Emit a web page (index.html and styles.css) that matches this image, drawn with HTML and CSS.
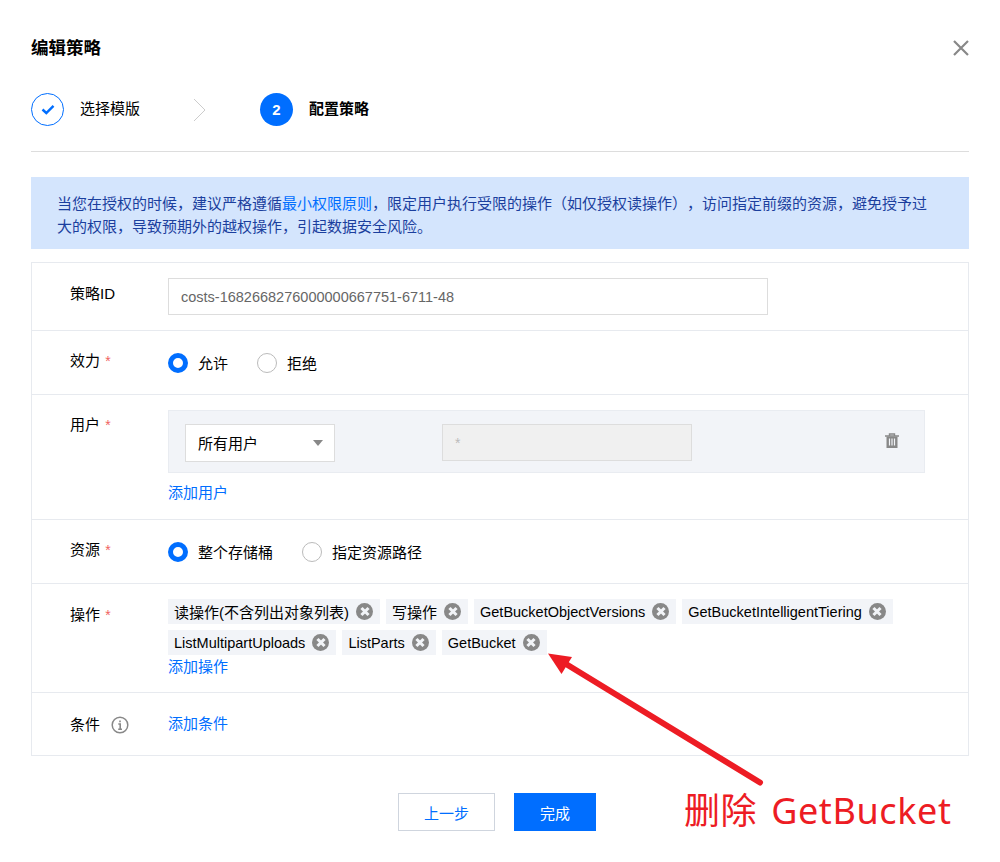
FILE: index.html
```html
<!DOCTYPE html>
<html lang="zh-CN">
  <head>
    <meta charset="UTF-8" />
    <meta name="viewport" content="width=device-width, initial-scale=1.0" />
    <title>编辑策略</title>
    <link rel="stylesheet" href="styles.css">
  </head>
  <body>
    <div class="dialog">
      <div class="dialog-head">
        <h1>编辑策略</h1>
        <svg class="close" width="16" height="16" viewBox="0 0 16 16">
          <path d="M1 1L15 15M15 1L1 15" stroke="#888" stroke-width="2.2" fill="none" />
        </svg>
      </div>

      <div class="steps">
        <div class="step-circle done">
          <svg width="14" height="11" viewBox="0 0 14 11">
            <path d="M1.5 5.5L5.3 9L12.5 1.8" stroke="#006eff" stroke-width="2.4" fill="none" />
          </svg>
        </div>
        <span class="step-label">选择模版</span>
        <svg class="step-arrow" width="13" height="24" viewBox="0 0 13 24">
          <path d="M1 1L12 12L1 23" stroke="#ccc" stroke-width="1" fill="none" />
        </svg>
        <div class="step-circle active">2</div>
        <span class="step-label current">配置策略</span>
      </div>

      <div class="alert">
        当您在授权的时候，建议严格遵循<a href="#">最小权限原则</a>，限定用户执行受限的操作（如仅授权读操作），访问指定前缀的资源，避免授予过大的权限，导致预期外的越权操作，引起数据安全风险。
      </div>

      <div class="form">
        <div class="row row-id">
          <div class="label">策略ID</div>
          <div class="field">
            <div class="text-input">costs-1682668276000000667751-6711-48</div>
          </div>
        </div>

        <div class="row row-radio">
          <div class="label">效力 <i>*</i></div>
          <div class="field radio-group">
            <span class="radio checked"></span><span class="radio-text">允许</span>
            <span class="radio"></span><span class="radio-text">拒绝</span>
          </div>
        </div>

        <div class="row row-user">
          <div class="label">用户 <i>*</i></div>
          <div class="field">
            <div class="user-box">
              <div class="select">所有用户<span class="caret"></span></div>
              <div class="disabled-input">*</div>
              <svg class="trash" width="16" height="16" viewBox="0 0 16 16">
                <path d="M5.5 2.5V1H10.5V2.5M1 3H15" stroke="#888" stroke-width="1.4" fill="none" />
                <path d="M2.5 3.5H13.5V15H2.5Z" fill="#888" />
                <path d="M5.5 5.5V12.5M8 5.5V12.5M10.5 5.5V12.5" stroke="#f2f4f8" stroke-width="1.2" fill="none" />
              </svg>
            </div>
            <a class="link add-user" href="#">添加用户</a>
          </div>
        </div>

        <div class="row row-radio">
          <div class="label">资源 <i>*</i></div>
          <div class="field radio-group">
            <span class="radio checked"></span><span class="radio-text">整个存储桶</span>
            <span class="radio"></span><span class="radio-text">指定资源路径</span>
          </div>
        </div>

        <div class="row row-action">
          <div class="label">操作 <i>*</i></div>
          <div class="field">
            <div class="tags">
              <span class="tag">读操作(不含列出对象列表)<b class="tag-x"></b></span>
              <span class="tag">写操作<b class="tag-x"></b></span>
              <span class="tag latin">GetBucketObjectVersions<b class="tag-x"></b></span>
              <span class="tag latin">GetBucketIntelligentTiering<b class="tag-x"></b></span>
              <span class="tag latin">ListMultipartUploads<b class="tag-x"></b></span>
              <span class="tag latin">ListParts<b class="tag-x"></b></span>
              <span class="tag latin">GetBucket<b class="tag-x"></b></span>
            </div>
            <a class="link" href="#">添加操作</a>
          </div>
        </div>

        <div class="row row-cond">
          <div class="label">条件
            <svg class="info" width="18" height="18" viewBox="0 0 18 18">
              <circle cx="9" cy="9" r="7.8" stroke="#888" stroke-width="1.5" fill="none" />
              <path d="M9 4.4V6.2M7.3 8H9.2V13M7.2 13.2H11" stroke="#888" stroke-width="1.6" fill="none" />
            </svg>
          </div>
          <div class="field"><a class="link" href="#">添加条件</a></div>
        </div>
      </div>

      <div class="footer">
        <button class="btn">上一步</button>
        <button class="btn primary">完成</button>
      </div>
    </div>

    <svg class="annotation-arrow" width="1000" height="862" viewBox="0 0 1000 862">
      <path d="M760 782.5L566 664" stroke="#ed1c24" stroke-width="6" stroke-linecap="round" fill="none" />
      <path d="M548 653.5L572 657L561.5 674Z" fill="#ed1c24" />
    </svg>
    <div class="annotation-text">删除 GetBucket</div>
  </body>
</html>
```

FILE: styles.css
```css
* {
  box-sizing: border-box;
}
body {
  margin: 0;
  background: #fff;
  color: #000;
  font-family: "Liberation Sans", "Noto Sans CJK SC", sans-serif;
  font-size: 15px;
}
a {
  color: #006eff;
  text-decoration: none;
}
.dialog {
  padding: 0 31px;
}
.dialog-head {
  display: flex;
  justify-content: space-between;
  align-items: center;
  height: 96px;
}
.dialog-head h1 {
  margin: 0 0 4px;
  font-size: 17.5px;
  font-weight: 700;
}
.steps {
  display: flex;
  align-items: center;
  height: 56px;
  padding-bottom: 28px;
  border-bottom: 1px solid #ddd;
}
.step-circle {
  width: 33px;
  height: 33px;
  border-radius: 50%;
  display: flex;
  align-items: center;
  justify-content: center;
}
.step-circle.done {
  border: 1px solid #006eff;
}
.step-circle.active {
  background: #006eff;
  color: #fff;
  font-weight: 700;
}
.step-label {
  margin: 0 0 5px 16px;
}
.step-label.current {
  font-weight: 700;
}
.step-arrow {
  margin: 0 54px 0 53px;
}
.alert {
  margin-top: 25px;
  height: 72px;
  padding: 15px 35px 0 26px;
  background: #d4e5fd;
  color: #1b3f9e;
  line-height: 23px;
  text-spacing-trim: space-all;
}
.form {
  margin-top: 13px;
  border: 1px solid #e7eaef;
}
.row {
  display: flex;
  border-bottom: 1px solid #e7eaef;
}
.row:last-child {
  border-bottom: none;
}
.row-id {
  height: 68px;
  padding-top: 15px;
}
.row-radio {
  height: 64px;
  padding-top: 22px;
}
.row-user {
  height: 125px;
  padding-top: 15px;
}
.row-action {
  height: 109px;
  padding-top: 15px;
}
.row-cond {
  height: 62px;
  padding-top: 21px;
}
.label {
  width: 136px;
  padding-left: 38px;
  line-height: 20px;
  flex: none;
}
.row-id .label,
.row-action .label {
  margin-top: 6px;
}
.row-radio .label {
  margin-top: -2px;
}
.row-user .label {
  margin-top: 5px;
}
.row-cond .label {
  margin-top: 1px;
}
.label i {
  color: #f0625f;
  font-style: normal;
  font-size: 14px;
  margin-left: 1px;
}
.field {
  flex: 1;
}
.text-input {
  width: 600px;
  height: 37px;
  padding-left: 12px;
  line-height: 36px;
  border: 1px solid #ddd;
  color: #666;
  font-size: 14.5px;
}
.radio-group {
  display: flex;
  align-items: center;
  height: 20px;
}
.radio {
  width: 20px;
  height: 20px;
  border-radius: 50%;
  border: 1px solid #bbb;
  flex: none;
}
.radio.checked {
  border: 5px solid #006eff;
}
.radio-text {
  margin: 0 29px 2px 10px;
}
.user-box {
  display: flex;
  align-items: flex-start;
  width: 757px;
  height: 63px;
  padding: 13px 0 0 16px;
  background: #f2f4f8;
  border: 1px solid #e9ecf1;
}
.select {
  position: relative;
  width: 150px;
  height: 38px;
  padding-left: 12px;
  line-height: 38px;
  background: #fff;
  border: 1px solid #ddd;
}
.caret {
  position: absolute;
  right: 11px;
  top: 15px;
  border-left: 5px solid transparent;
  border-right: 5px solid transparent;
  border-top: 6px solid #888;
}
.disabled-input {
  width: 250px;
  height: 37px;
  margin-left: 107px;
  padding-left: 12px;
  line-height: 36px;
  background: #f0f0f0;
  border: 1px solid #ddd;
  color: #bbb;
  font-size: 14px;
}
.trash {
  margin: 9px 0 0 192px;
}
.link {
  display: block;
  line-height: 20px;
}
.add-user {
  margin-top: 10px;
}
.tags {
  display: flex;
  flex-wrap: wrap;
  gap: 6px;
}
.tag {
  display: inline-flex;
  align-items: center;
  height: 25px;
  padding: 0 7px 0 6px;
  background: #f2f4f8;
}
.tag.latin {
  font-size: 14.5px;
}
.tag-x {
  position: relative;
  width: 17px;
  height: 17px;
  margin-left: 7px;
  border-radius: 50%;
  background: #888;
}
.tag-x::before,
.tag-x::after {
  content: "";
  position: absolute;
  left: 3.5px;
  top: 7px;
  width: 10px;
  height: 3px;
  background: #f2f4f8;
  transform: rotate(45deg);
}
.tag-x::after {
  transform: rotate(-45deg);
}
.row-action .link {
  margin-top: 2px;
}
.info {
  margin-left: 7px;
  vertical-align: -4px;
}
.footer {
  display: flex;
  justify-content: center;
  gap: 19px;
  margin-top: 37px;
  padding-right: 6px;
}
.btn {
  width: 97px;
  height: 38px;
  background: #fff;
  border: 1px solid #cfd5de;
  color: #006eff;
  font-family: inherit;
  font-size: 15px;
}
.btn.primary {
  width: 82px;
  background: #006eff;
  border-color: #006eff;
  color: #fff;
}
/* annotation drawn over the screenshot */
.annotation-arrow {
  position: absolute;
  left: 0;
  top: 0;
  pointer-events: none;
}
.annotation-text {
  position: absolute;
  left: 684px;
  top: 786px;
  color: #ed1c24;
  font-size: 36px;
  line-height: 50px;
  letter-spacing: 0.6px;
  word-spacing: 4px;
  white-space: nowrap;
  font-family: "Noto Sans", "Noto Sans CJK SC", sans-serif;
}
```
